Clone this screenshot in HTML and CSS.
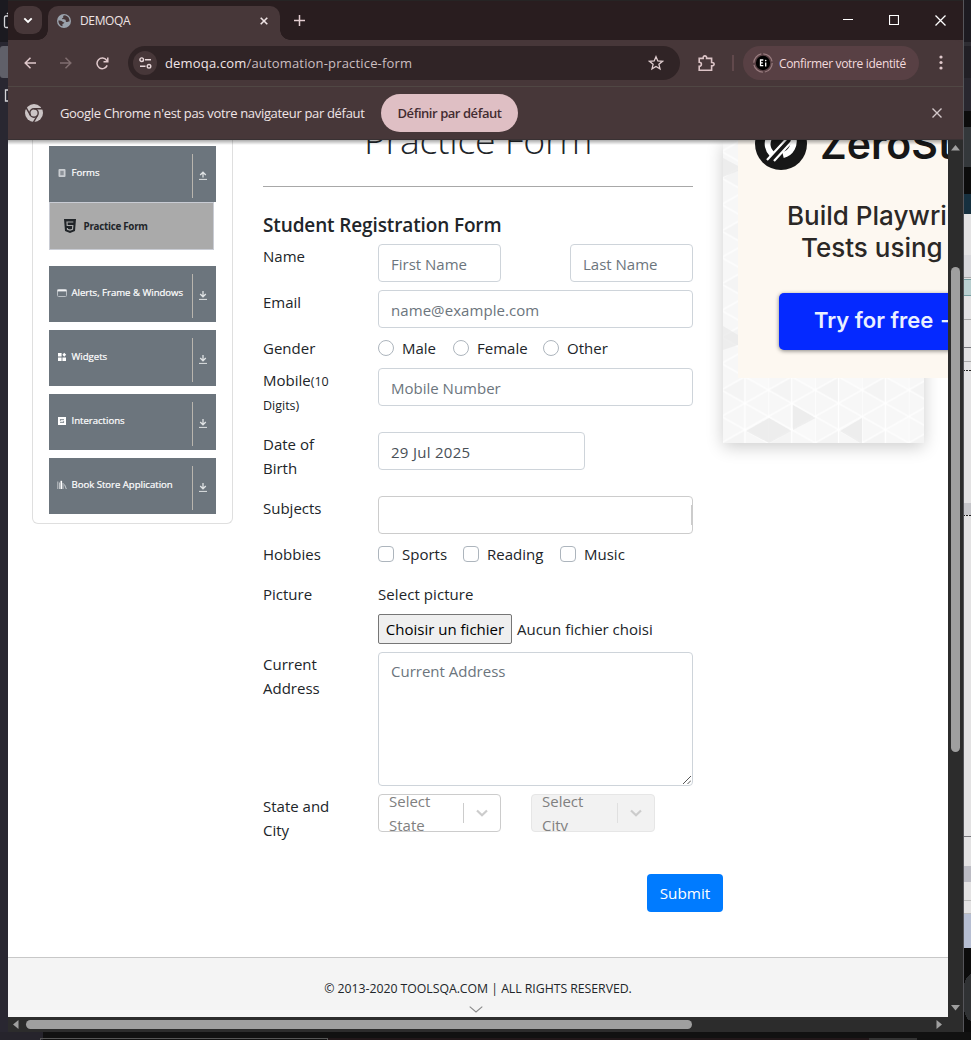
FILE: index.html
```
<!DOCTYPE html>
<html lang="fr">
<head>
<meta charset="utf-8">
<title>DEMOQA</title>
<link rel="stylesheet" href="styles.css">
</head>
<body>
<div class="desktop">
  <div class="edge-left">
    <svg width="8" height="1032"><rect width="8" height="42" fill="#1b1a20"/><rect y="42" width="8" height="990" fill="#292731"/><path d="M8 16H6q-1.500 0-1.500 2v8q0 1.500 1.500 1.500h2M7 13l1 1M8 90H5.500v11H8" fill="none" stroke="#d5d5d9" stroke-width="1.300"/><rect y="46" width="12" height="32" rx="3" fill="#606069"/></svg>
  </div>
  <div class="window">
    <div class="titlebar">
      <div class="tabsearch"><svg width="10" height="7" viewBox="0 0 10 7"><path d="M1.300 1.300 5 5 8.700 1.300" fill="none" stroke="#fff" stroke-width="1.900"/></svg></div>
      <div class="tab">
        <svg width="14" height="14" viewBox="0 0 14 14"><circle cx="7" cy="7" r="7" fill="#9aa2ac"/><path d="M8 1.300c-2 .4-2.500 1-1.500 1.700-.2 1-1.500.8-1.500 2 .8.700 2.800 0 3.500.8.600.9-.2 1.500.7 2.200 1.200.4 2-.7 3.300-.5.300-2.700-1.300-5.500-4.500-6.200zM1.400 6.500c1.600-.1 3.300.3 4 .9.500.8 1.500.6 2 1.200-.1 1.100-1.500.8-2 1.600-.1 1 .5 1.500-.2 2.100C2.700 11.500 1.200 9 1.400 6.500z" fill="#473739"/></svg>
        <span class="tab-title">DEMOQA</span>
        <svg class="tab-x" width="8" height="8" viewBox="0 0 8 8"><path d="M.7.700l6.600 6.600M7.300.700.7 7.300" stroke="#eee3e4" stroke-width="1.600"/></svg>
      </div>
      <svg class="newtab" width="11" height="11" viewBox="0 0 11 11"><path d="M5.500 0v11M0 5.500h11" stroke="#e3cdd0" stroke-width="1.500"/></svg>
      <div class="wincontrols">
        <svg width="10" height="10"><path d="M0 4.500h10" stroke="#fff"/></svg>
        <svg width="10" height="10"><path d="M.5.500h9v9h-9z" fill="none" stroke="#fff" stroke-width="1.200"/></svg>
        <svg width="11" height="11"><path d="M.5.500l10 10M10.500.500l-10 10" stroke="#fff" stroke-width="1.300"/></svg>
      </div>
    </div>
    <div class="toolbar">
      <svg class="nav" width="12" height="12" viewBox="0 0 12 12"><path d="M12 6H1.300M6.500.700 1.200 6l5.300 5.300" fill="none" stroke="#e0c9cc" stroke-width="1.500"/></svg>
      <svg class="nav" width="12" height="12" viewBox="0 0 12 12"><path d="M0 6h10.700M5.500.700 10.800 6l-5.300 5.300" fill="none" stroke="#806e70" stroke-width="1.500"/></svg>
      <svg class="nav" width="13" height="13" viewBox="0 0 13 13"><path d="M11.200 8.400A5.300 5.300 0 1 1 10.600 3.200L11.800 4.600M11.800.500v4.300H7.500" fill="none" stroke="#e0c9cc" stroke-width="1.500"/></svg>
      <div class="omnibox">
        <span class="site"><svg width="13" height="12" viewBox="0 0 13 12"><path d="M6 2.700h6M1 9.300h5.500" stroke="#e8d8da" stroke-width="1.400"/><circle cx="2.700" cy="2.700" r="1.800" fill="none" stroke="#e8d8da" stroke-width="1.400"/><circle cx="10" cy="9.300" r="1.800" fill="none" stroke="#e8d8da" stroke-width="1.400"/></svg></span>
        <span class="url"><b>demoqa.com</b>/automation-practice-form</span>
        <svg class="star" width="16" height="16" viewBox="0 0 16 16"><path d="M8 1.700 9.800 6l4.700.3-3.600 3 1.100 4.500-4-2.400-4 2.400 1.100-4.500-3.600-3L6.200 6z" fill="none" stroke="#e0ced0" stroke-width="1.300"/></svg>
      </div>
      <svg class="ext" width="17" height="17" viewBox="0 0 17 17"><path d="M1.200 3.400h4c-.2-1.700.6-2.500 1.700-2.500s1.900.8 1.700 2.500h5v4.100c1.700-.1 2.500.7 2.500 1.700s-.8 1.800-2.500 1.700v4.300H1.200v-4c1.600 0 2.200-.8 2.200-2s-.6-2-2.200-2z" fill="none" stroke="#dcc4c7" stroke-width="1.600"/></svg>
      <i class="sep"></i>
      <div class="profile">
        <svg width="20" height="20" viewBox="0 0 20 20"><circle cx="10" cy="10" r="9.200" fill="none" stroke="#9a7d80" stroke-width="1.200" stroke-dasharray="12.450 2"/><circle cx="10" cy="10" r="7.200" fill="#000"/><path d="M10.300 7H7.500v5.600h2.800M7.500 9.800h2.300M12.700 9.500v4" stroke="#fff" stroke-width="1.300" fill="none"/><circle cx="12.700" cy="7.600" r=".8" fill="#fff"/></svg>
        <span>Confirmer votre identité</span>
      </div>
      <svg class="dots" width="4" height="16"><g fill="#e0c9cc"><circle cx="2" cy="2" r="1.600"/><circle cx="2" cy="7.500" r="1.600"/><circle cx="2" cy="13" r="1.600"/></g></svg>
    </div>
    <div class="infobar">
      <svg width="18" height="18" viewBox="0 0 18 18"><circle cx="9" cy="9" r="9" fill="#cbc4c5"/><g fill="none" stroke="#473739" stroke-width="1.400"><circle cx="9" cy="9" r="4.200"/><path d="M9 4.800h8.500M5.400 11.100 1.100 3.700M12.600 11.100 8.400 18.400"/></g></svg>
      <span class="info-text">Google Chrome n'est pas votre navigateur par défaut</span>
      <button class="info-btn">Définir par défaut</button>
      <svg class="info-x" width="10" height="10"><path d="M.5.500l9 9M9.500.500l-9 9" stroke="#d4c8ca" stroke-width="1.400"/></svg>
    </div>
    <div class="content">
      <div class="page">
        <div class="columns">
          <nav class="sidebar">
            <div class="group"><svg width="10" height="10" viewBox="0 0 10 10"><rect x="1.500" y="1" width="7" height="8" rx="1" fill="#c9cdd1"/><path d="M3.300 2.800h3.400v4.400H3.300z" fill="#8b9198"/></svg><span>Forms</span><i class="arrow"><svg width="8" height="9" viewBox="0 0 8 9"><path d="M4 6.500V1.500M1.200 4 4 1.200 6.800 4" fill="none" stroke="#dfe2e4" stroke-width="1.300"/><path d="M0 8.400h8" stroke="#dfe2e4"/></svg></i></div>
            <div class="subitem"><svg width="12" height="14" viewBox="0 0 12 14"><path d="M0 0h12l-1 12-5 2-5-2z" fill="#212529"/><path d="M9.300 3H3l.2 3.500h5.600l-.3 3.800-2.500.8-2.500-.8-.1-1.300" fill="none" stroke="#aaa" stroke-width="1.200"/></svg><span>Practice Form</span></div>
            <div class="group"><svg width="10" height="10" viewBox="0 0 10 10"><rect x=".5" y="1.500" width="9" height="7" rx="1" fill="none" stroke="#b8bdc2"/><path d="M.5 2.500h9" stroke="#f2f3f4" stroke-width="1.800"/></svg><span>Alerts, Frame &amp; Windows</span><i class="arrow"><svg width="8" height="9" viewBox="0 0 8 9"><path d="M4 0v5.500M1.200 3 4 5.800 6.800 3" fill="none" stroke="#dfe2e4" stroke-width="1.300"/><path d="M0 8.400h8" stroke="#dfe2e4"/></svg></i></div>
            <div class="group"><svg width="10" height="10" viewBox="0 0 10 10"><path d="M1 1h3.600v3.600H1zM5.400 2.800 7.200.800 9.200 2.800 7.200 4.800zM1 5.400h3.600V9H1zM5.400 5.400H9V9H5.400z" fill="#fff"/></svg><span>Widgets</span><i class="arrow"><svg width="8" height="9" viewBox="0 0 8 9"><path d="M4 0v5.500M1.200 3 4 5.800 6.800 3" fill="none" stroke="#dfe2e4" stroke-width="1.300"/><path d="M0 8.400h8" stroke="#dfe2e4"/></svg></i></div>
            <div class="group"><svg width="10" height="10" viewBox="0 0 10 10"><path d="M1 1h8v8H1z" fill="#fff"/><path d="M3 3.700h4M3 6.300h4M3.400 3.700v1M6.600 5.300v1" stroke="#6c757d" stroke-width=".9"/></svg><span>Interactions</span><i class="arrow"><svg width="8" height="9" viewBox="0 0 8 9"><path d="M4 0v5.500M1.200 3 4 5.800 6.800 3" fill="none" stroke="#dfe2e4" stroke-width="1.300"/><path d="M0 8.400h8" stroke="#dfe2e4"/></svg></i></div>
            <div class="group"><svg width="10" height="10" viewBox="0 0 10 10"><path d="M.8 1.500v7.500M2.500 2.500V9" stroke="#c0c4c8" stroke-width="1"/><path d="M4.300.800V9" stroke="#fff" stroke-width="1.600"/><path d="M6 3v6M7.500 4.500 9.300 9" stroke="#c9cdd0" stroke-width="1"/></svg><span>Book Store Application</span><i class="arrow"><svg width="8" height="9" viewBox="0 0 8 9"><path d="M4 0v5.500M1.200 3 4 5.800 6.800 3" fill="none" stroke="#dfe2e4" stroke-width="1.300"/><path d="M0 8.400h8" stroke="#dfe2e4"/></svg></i></div>
          </nav>
          <main class="main">
            <h1>Practice Form</h1>
            <h5>Student Registration Form</h5>
            <form class="form">
              <div class="row r46"><label>Name</label><div class="field between"><div class="input w123">First Name</div><div class="input w123">Last Name</div></div></div>
              <div class="row r46"><label>Email</label><div class="field"><div class="input mail">name@example.com</div></div></div>
              <div class="row r32"><label>Gender</label><div class="field options"><span class="opt male"><i class="radio"></i>Male</span><span class="opt female"><i class="radio"></i>Female</span><span class="opt"><i class="radio"></i>Other</span></div></div>
              <div class="row r64"><label>Mobile<small>(10<br>Digits)</small></label><div class="field"><div class="input">Mobile Number</div></div></div>
              <div class="row r64"><label>Date of<br>Birth</label><div class="field"><div class="input date">29 Jul 2025</div></div></div>
              <div class="row r46"><label>Subjects</label><div class="field"><div class="input subjects"><i></i></div></div></div>
              <div class="row r40"><label>Hobbies</label><div class="field options"><span class="opt sports"><i class="check"></i>Sports</span><span class="opt reading"><i class="check"></i>Reading</span><span class="opt"><i class="check"></i>Music</span></div></div>
              <div class="row r70"><label>Picture</label><div class="field"><div class="select-pic">Select picture</div><div class="file"><span class="file-btn">Choisir un fichier</span><span class="file-none">Aucun fichier choisi</span></div></div></div>
              <div class="row r142"><label>Current<br>Address</label><div class="field"><div class="input area">Current Address<svg width="8" height="8"><path d="M0 8 8 0M4.500 8 8 4.500" stroke="#555" stroke-width="1"/></svg></div></div></div>
              <div class="row r80"><label>State and<br>City</label><div class="field selects">
                <div class="select"><span>Select<br>State</span><i></i><svg width="12" height="8" viewBox="0 0 12 8"><path d="M1 1.500 6 6.300 11 1.500" fill="none" stroke="#ccc" stroke-width="2.200"/></svg></div>
                <div class="select disabled"><span>Select<br>City</span><i></i><svg width="12" height="8" viewBox="0 0 12 8"><path d="M1 1.500 6 6.300 11 1.500" fill="none" stroke="#ccc" stroke-width="2.200"/></svg></div></div></div>
              <div class="submit"><button type="button">Submit</button></div>
            </form>
          </main>
          <aside class="ad">
            <svg width="225" height="303" viewBox="0 0 225 303">
              <defs>
                <pattern id="tri" width="46.800" height="53" patternUnits="userSpaceOnUse" patternTransform="translate(-1.500 11.500)"><rect width="46.800" height="53" fill="#f7f7f7"/><path d="M0 26.500 23.400 13v27z" fill="#f4f4f4"/><path d="M23.400 13 46.800 26.500V0z" fill="#f9f9f9"/><path d="M0 0v53M23.400 0v53M0 0l46.800 26.500L0 53M46.800 0 0 26.500 46.800 53" fill="none" stroke="#fff" stroke-width="1.300"/></pattern>
              </defs>
              <rect width="201" height="303" fill="url(#tri)"/>
              <path d="M23 291 46 278l22.500 13L46 303zM117 291l22-13v26zM70 277V265l22.500 13L70 290zM0 210v-24l15 9v10zM0 37V18l15 8v5z" fill="#e8e8e8" opacity=".7"/>
              <rect x="15" width="210" height="238" fill="#fdf8f1"/>
              <circle cx="58" cy="4" r="26" fill="#171717"/>
              <path d="M46-2a14 14 0 0 0 3 16M60 15a14 14 0 0 0 10-18" fill="none" stroke="#fff" stroke-width="6"/>
              <path d="M44 20 68-6M51 21 74-4" stroke="#fff" stroke-width="2.200"/>
              <text x="97" y="19" class="ad-brand">ZeroSt</text>
              <text x="64" y="85" class="ad-line">Build Playwri</text>
              <text x="78" y="116.500" class="ad-line">Tests using</text>
              <g class="ad-cta"><rect x="56" y="153" width="190" height="57" rx="5" fill="#0529ff"/></g>
              <text x="91" y="188" class="ad-try">Try for free →</text>
            </svg>
          </aside>
        </div>
        <footer><span>© 2013-2020 TOOLSQA.COM | ALL RIGHTS RESERVED.</span><svg width="14" height="7" viewBox="0 0 14 7"><path d="M.7.700 7 6 13.300.700" fill="none" stroke="#888" stroke-width="1.100"/></svg></footer>
      </div>
      <div class="vscroll"><svg width="9" height="6"><path d="M0 5.500 4.500 0 9 5.500z" fill="#9f9f9f"/></svg><i></i><svg width="9" height="6"><path d="M0 0h9L4.500 5.500z" fill="#9f9f9f"/></svg></div>
      <div class="hscroll"><svg width="6" height="9"><path d="M5.500 0v9L0 4.500z" fill="#9f9f9f"/></svg><i></i><svg width="6" height="9"><path d="M.5 0v9L6 4.500z" fill="#9f9f9f"/></svg></div>
    </div>
  </div>
  <div class="edge-right">
    <svg width="8" height="1032" shape-rendering="crispEdges"><rect width="8" height="1032" fill="#e3e2e3"/><rect width="8" height="42" fill="#1d1b21"/><rect y="42" width="8" height="4" fill="#2e2d33"/><rect y="46" width="8" height="32" fill="#211f25"/><rect y="78" width="8" height="33" fill="#29272f"/><rect y="111" width="8" height="16" fill="#0c0c0c"/><rect y="127" width="8" height="40" fill="#34383b"/><rect y="167" width="8" height="27" fill="#0c0c0c"/><rect y="194" width="8" height="20" fill="#16303f"/><rect y="255" width="8" height="22" fill="#d8d8dc"/><path d="M0 277.500h8M0 319.500h8M0 361.500h8" stroke="#aaa"/><rect y="279" width="8" height="17" fill="#b9cfd0"/><path d="M0 279.500h8M0 295.500h8" stroke="#759da0"/><path d="M0 347.500h8M0 836.500h8" stroke="#77777c"/><path d="M0 370.500h8M0 515.500h8" stroke="#222" stroke-dasharray="2 1"/><rect y="503" width="8" height="12" fill="#c6c6ca"/><rect y="866" width="8" height="16" fill="#bcbcc4"/><path d="M0 900.500h8M0 913.500h8" stroke="#bbb"/><rect y="914" width="8" height="34" fill="#b6bed2"/><rect y="948" width="8" height="84" fill="#0c0c0c"/><path d="M8 974q-8 3-8 24t8 23z" fill="#303234"/><path d="M0 0v1032" stroke="#55555a"/></svg>
  </div>
  <div class="edge-bottom"><i></i><b></b><em></em></div>
</div>
</body>
</html>
```
FILE: styles.css
```
* { box-sizing: border-box; }
body { margin: 0; width: 971px; height: 1040px; overflow: hidden; font-family: "Open Sans", "Noto Sans", sans-serif; color: #212529; }
svg { display: block; flex: none; }
i { display: block; flex: none; }
.desktop { display: grid; grid-template-columns: 8px 955px 8px; grid-template-rows: 1032px 8px; background: #111; }
.window { display: flex; flex-direction: column; background: #473739; }

.titlebar { height: 40px; flex: none; display: flex; background: #291d1f; border-top: 1px solid #262424; }
.tabsearch { width: 28px; height: 28px; margin: 5px 6px 0; border-radius: 9px; background: #473739; display: flex; align-items: center; justify-content: center; }
.tab { position: relative; width: 232px; height: 34px; margin-top: 5px; border-radius: 10px 10px 0 0; background: #473739; display: flex; align-items: center; padding: 0 12px 5px 9px; }
.tab::before, .tab::after { content: ""; position: absolute; bottom: 0; width: 10px; height: 10px; }
.tab::before { left: -10px; background: radial-gradient(circle at 0 0, transparent 9.500px, #473739 10px); }
.tab::after { right: -10px; background: radial-gradient(circle at 100% 0, transparent 9.500px, #473739 10px); }
.tab-title { margin-left: 9px; font-size: 12px; letter-spacing: -0.350px; color: #efe4e5; }
.tab-x { margin-left: auto; }
.newtab { margin: 14px 0 0 14px; }
.wincontrols { margin-left: auto; display: flex; gap: 36px; padding: 14px 17px 0 0; }

.toolbar { height: 47px; flex: none; display: flex; align-items: center; border-bottom: 1px solid #504744; background: #473739; border-radius: 0 8px 0 0; padding-left: 16px; }
.nav { margin-right: 24px; }
.nav + .nav + .nav { margin-right: 19px; }
.omnibox { width: 552px; height: 34px; border-radius: 17px; background: #302426; display: flex; align-items: center; padding: 0 16px 0 5px; }
.site { width: 24px; height: 24px; border-radius: 50%; background: #473739; display: flex; align-items: center; justify-content: center; }
.url { margin-left: 8px; font-size: 13px; letter-spacing: 0.170px; color: #cbbfc1; }
.url b { font-weight: 400; color: #f0e5e6; }
.star { margin-left: auto; }
.ext { margin-left: 18px; }
.sep { width: 2px; height: 16px; margin: 0 9px 0 17px; background: #61494c; }
.profile { width: 176px; height: 34px; border-radius: 17px; background: #584044; display: flex; align-items: center; padding-left: 10px; font-size: 12px; letter-spacing: -0.340px; color: #f3dbde; }
.profile span { margin-left: 6px; white-space: nowrap; }
.dots { margin-left: 20px; }

.infobar { height: 53px; flex: none; display: flex; align-items: center; padding: 0 21px 0 17px; border-bottom: 1px solid #393133; }
.info-text { margin-left: 17px; width: 306px; white-space: nowrap; font-size: 13px; letter-spacing: -0.330px; color: #efe5e6; }
.info-btn { margin-left: 15px; width: 137px; height: 38px; padding: 0; border: 0; border-radius: 19px; background: #dfbfc4; color: #432c31; font: 600 13px "Open Sans", sans-serif; letter-spacing: -0.450px; white-space: nowrap; }
.info-x { margin-left: auto; }

.content { flex: 1; display: grid; grid-template-columns: 940px 15px; grid-template-rows: 877px 15px; background: #2c2c2c; }
.page { position: relative; overflow: hidden; background: #fff; display: flex; flex-direction: column; }
.page::before { content: ""; position: absolute; z-index: 2; left: 0; right: 0; top: 0; height: 5px; background: linear-gradient(#0005, #0000); }
.vscroll { display: flex; flex-direction: column; align-items: center; padding: 5px 0 6px; }
.vscroll i { width: 9px; height: 485px; margin: 116px 0 auto; border-radius: 5px; background: #9f9f9f; }
.hscroll { grid-column: 1 / 3; display: flex; align-items: center; padding: 0 21px 0 5px; }
.hscroll i { width: 666px; height: 9px; margin: 0 auto 0 7px; border-radius: 5px; background: #9f9f9f; }

.columns { display: flex; gap: 30px; padding-left: 24px; height: 817px; flex: none; align-items: flex-start; }
.sidebar { width: 201px; height: 384px; flex: none; border: 1px solid #dfdfdf; border-top: 0; border-radius: 0 0 6px 6px; padding: 6px 16px 0; display: flex; flex-direction: column; gap: 8px; }
.group { width: 167px; height: 56px; flex: none; background: #6c757d; color: #fff; display: flex; padding-left: 8px; font-size: 9.600px; line-height: 12px; white-space: nowrap; }
.group > svg { margin-top: 22px; }
.group > span { margin: 20.500px 0 0 4.500px; letter-spacing: -0.020px; -webkit-text-stroke: .2px #fff; }
.arrow { margin: 8px 0 0 auto; width: 24px; height: 44px; border-left: 1px solid #b9b5ae; padding: 17px 0 0 6px; }
.subitem { width: 165px; height: 48px; flex: none; margin: -8px 0 8px; background: #aaa; border: 1px solid #c9ccd4; display: flex; align-items: center; padding-left: 14px; font-weight: 700; font-size: 9.800px; letter-spacing: -0.270px; }
.subitem span { margin-left: 7.500px; }

.main { width: 430px; flex: none; }
h1 { margin: -24px 0 0; height: 71px; line-height: 48px; font-size: 37.500px; font-weight: 300; text-align: center; border-bottom: 1px solid #a8a8a8; letter-spacing: -0.300px; }
h5 { margin: 26px 0 7px; height: 24px; font-size: 19px; line-height: 24px; font-weight: 600; letter-spacing: -0.130px; white-space: nowrap; }
.form { font-size: 15px; line-height: 24px; }
.row { display: flex; }
.row label { width: 115px; flex: none; }
small { font-size: 12.500px; line-height: 20px; }
.field { width: 315px; }
.between { display: flex; justify-content: space-between; }
.r32 { height: 32px; } .r40 { height: 40px; } .r46 { height: 46px; } .r64 { height: 64px; } .r70 { height: 70px; } .r142 { height: 142px; } .r80 { height: 80px; }
.input { height: 38px; border: 1px solid #ced4da; border-radius: 4px; padding: 7px 12px; color: #6c757d; white-space: nowrap; }
.w123 { width: 123px; }
.date { width: 207px; color: #495057; letter-spacing: .28px; }
.mail { letter-spacing: .07px; }
.subjects { display: flex; justify-content: flex-end; padding: 8px 0; border-color: #ccc; }
.subjects i { width: 1px; height: 20px; background: #ccc; }
.options { display: flex; height: 24px; }
.opt { display: flex; align-items: center; gap: 8px; }
.radio, .check { width: 16px; height: 16px; border: 1px solid #adb5bd; border-radius: 4px; }
.radio { border-radius: 50%; }
.male { width: 75px; } .female { width: 90px; } .sports { width: 85px; } .reading { width: 97px; }
.select-pic { height: 32px; letter-spacing: .07px; }
.file { display: flex; align-items: center; white-space: nowrap; }
.file-btn { width: 134px; height: 30px; border: 1px solid #767676; border-radius: 2px; background: #efefef; color: #000; line-height: 28px; text-align: center; }
.file-none { margin-left: 5px; }
.area { height: 134px; display: flex; justify-content: space-between; align-items: flex-start; padding: 6px 1px 1px 12px; }
.area svg { align-self: flex-end; }
.selects { display: flex; gap: 30px; }
.select { width: 123px; height: 38px; border: 1px solid #ccc; border-radius: 4px; overflow: hidden; display: flex; align-items: center; padding: 0 12px 0 10px; color: gray; }
.select i { width: 1px; height: 20px; background: #ccc; margin-left: auto; margin-right: 12px; }
.disabled { width: 124px; background: #f2f2f2; border-color: #e6e6e6; }
.disabled i { background: #e0e0e0; }
.submit { display: flex; justify-content: flex-end; margin-right: -30px; }
.submit button { width: 76px; height: 38px; border: 0; border-radius: 4px; background: #007bff; color: #fff; font: 15.300px "Open Sans", sans-serif; padding: 0; }
footer { flex: none; height: 60px; background: #f4f4f4; border-top: 1px solid #c8c8c8; display: flex; flex-direction: column; align-items: center; padding-top: 21px; font-size: 12.300px; line-height: 20px; letter-spacing: -0.040px; }
footer svg { margin: 7px 4px 0 0; }

.ad { width: 201px; height: 303px; flex: none; box-shadow: 0 4px 16px #0003; }
.ad-brand { font: 600 41px Inter, sans-serif; fill: #171717; }
.ad-line { font: 500 26px Inter, sans-serif; fill: #2b2826; }
.ad-try { font: 600 22px Inter, sans-serif; fill: #eaf0ff; }
.ad-cta { filter: drop-shadow(0 1px 2px #0007); }
.edge-left, .edge-right { overflow: hidden; }
.edge-bottom { grid-column: 1 / 4; display: flex; align-items: flex-end; background: linear-gradient(90deg, #26242c 43px, #111 43px); }
.edge-bottom i { width: 288px; height: 2px; margin-left: 40px; border: 1px solid #555; border-bottom: 0; }
.edge-bottom b { width: 541px; height: 2px; background: #211719; }
.edge-bottom em { width: 48px; height: 2px; background: #333; }
```
